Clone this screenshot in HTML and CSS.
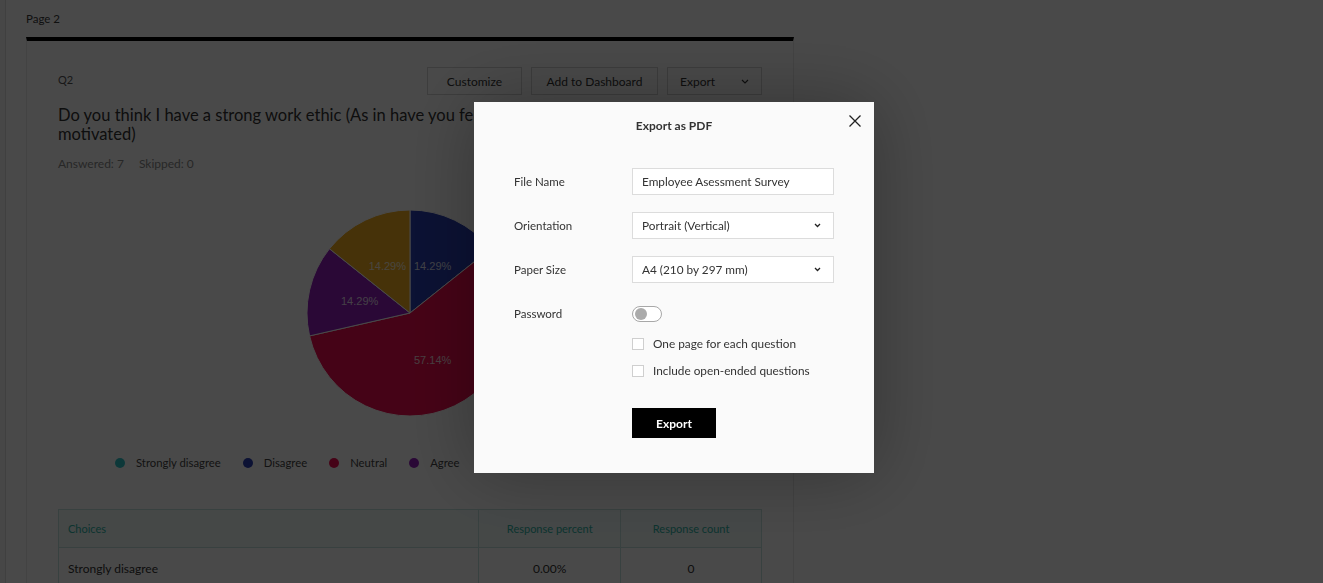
FILE: index.html
```html
<!DOCTYPE html>
<html lang="en">
<head>
<meta charset="utf-8">
<title>Survey report - Export as PDF</title>
<link rel="stylesheet" href="styles.css">
</head>
<body>
<div class="app">
  <aside class="rail"></aside>
  <main class="content">
    <div class="page-label">Page 2</div>
    <section class="card">
      <div class="card-head">
        <span class="qno">Q2</span>
        <div class="actions">
          <button class="btn btn-customize">Customize</button>
          <button class="btn btn-dash">Add to Dashboard</button>
          <button class="btn btn-export">Export
            <svg class="chev" viewBox="0 0 8 5" width="8" height="5"><path d="M1 1l3 3 3-3" fill="none" stroke="#333" stroke-width="1.2"/></svg>
          </button>
        </div>
      </div>
      <h2 class="question">Do you think I have a strong work ethic (As in have you felt motivated)</h2>
      <div class="stats"><span>Answered: 7</span><span>Skipped: 0</span></div>
      <div class="chart">
        <svg width="704" height="240" viewBox="0 0 704 240">
          <g stroke="#ffffff" stroke-width="1">
            <path d="M352 115 L352 12 A103 103 0 0 1 432.53 50.78 Z" fill="#2a3fb4"/>
            <path d="M352 115 L432.53 50.78 A103 103 0 1 1 251.58 137.92 Z" fill="#f20d50"/>
            <path d="M352 115 L251.58 137.92 A103 103 0 0 1 271.47 50.78 Z" fill="#931ebd"/>
            <path d="M352 115 L271.47 50.78 A103 103 0 0 1 352 12 Z" fill="#f5b020"/>
          </g>
          <g class="pie-labels">
            <text x="356" y="72">14.29%</text>
            <text x="348" y="72" text-anchor="end">14.29%</text>
            <text x="283" y="107">14.29%</text>
            <text x="356" y="166">57.14%</text>
          </g>
        </svg>
      </div>
      <ul class="legend">
        <li><i class="dot" style="background:#2ec4c8"></i>Strongly disagree</li>
        <li><i class="dot" style="background:#2a3fb4"></i>Disagree</li>
        <li><i class="dot" style="background:#f20d50"></i>Neutral</li>
        <li><i class="dot" style="background:#931ebd"></i>Agree</li>
        <li><i class="dot" style="background:#f5b020"></i>Strongly agree</li>
      </ul>
      <table class="results">
        <thead>
          <tr><th class="c-choice">Choices</th><th class="c-pct">Response percent</th><th class="c-cnt">Response count</th></tr>
        </thead>
        <tbody>
          <tr><td class="c-choice">Strongly disagree</td><td class="c-pct">0.00%</td><td class="c-cnt">0</td></tr>
        </tbody>
      </table>
    </section>
  </main>
</div>

<div class="overlay"></div>

<div class="modal" role="dialog" aria-label="Export as PDF">
  <button class="close" aria-label="Close">
    <svg viewBox="0 0 12 12" width="12" height="12"><path d="M0.5 0.5L11.5 11.5M11.5 0.5L0.5 11.5" stroke="#222" stroke-width="1.3" fill="none"/></svg>
  </button>
  <div class="modal-title">Export as PDF</div>
  <form class="form">
    <div class="row">
      <label class="lbl">File Name</label>
      <div class="field">Employee Asessment Survey</div>
    </div>
    <div class="row">
      <label class="lbl">Orientation</label>
      <div class="field select">Portrait (Vertical)
        <svg class="sel-chev" viewBox="0 0 7 5" width="7" height="5"><path d="M1 1l2.5 2.5L6 1" fill="none" stroke="#222" stroke-width="1.3"/></svg>
      </div>
    </div>
    <div class="row">
      <label class="lbl">Paper Size</label>
      <div class="field select">A4 (210 by 297 mm)
        <svg class="sel-chev" viewBox="0 0 7 5" width="7" height="5"><path d="M1 1l2.5 2.5L6 1" fill="none" stroke="#222" stroke-width="1.3"/></svg>
      </div>
    </div>
    <div class="row row-last">
      <label class="lbl">Password</label>
      <span class="toggle"><span class="knob"></span></span>
    </div>
    <div class="check-row"><span class="box"></span>One page for each question</div>
    <div class="check-row"><span class="box"></span>Include open-ended questions</div>
    <div class="actions-row"><button type="button" class="export-btn">Export</button></div>
  </form>
</div>
</body>
</html>
```

FILE: styles.css
```css
* { box-sizing: border-box; }

body {
  margin: 0;
  width: 1323px;
  height: 583px;
  overflow: hidden;
  background: #ffffff;
  font-family: Lato, "Noto Sans", sans-serif;
  color: #333;
}

.app {
  display: flex;
  height: 583px;
}

.rail {
  flex: none;
  width: 6px;
  background: #f7f7f7;
  border-right: 1px solid #e0e0e0;
}

.content {
  flex: 1;
  padding-left: 20px;
}

.page-label {
  height: 37px;
  line-height: 38px;
  font-size: 11.5px;
  color: #3a3a3a;
}

.card {
  width: 768px;
  border-top: 4px solid #000;
  border-left: 1px solid #e8e8e8;
  border-right: 1px solid #e8e8e8;
  padding: 0 31px;
}

.card-head {
  display: flex;
  justify-content: space-between;
  align-items: center;
  padding-top: 26px;
}

.qno {
  font-size: 11px;
  color: #555;
  margin-top: -4px;
}

.actions {
  display: flex;
  gap: 9px;
}

.btn {
  height: 28px;
  border: 1px solid #d4d4d4;
  background: #fff;
  font-family: inherit;
  font-size: 12px;
  color: #333;
  padding: 0;
}

.btn-customize { width: 95px; }
.btn-dash { width: 127px; }
.btn-export {
  width: 95px;
  display: flex;
  align-items: center;
  justify-content: space-between;
  padding: 0 12px 0 12px;
}

.question {
  margin: 10px 0 0;
  max-width: 460px;
  font-size: 16.5px;
  line-height: 19px;
  font-weight: 400;
  color: #333;
  padding-top: 1px;
}

.stats {
  margin-top: 13px;
  font-size: 12px;
  line-height: 14px;
  color: #8a8a8a;
  display: flex;
  gap: 15px;
}

.chart {
  margin-top: 27px;
  height: 240px;
}

.chart svg { display: block; }

.pie-labels text {
  font-family: "Liberation Sans", Arial, sans-serif;
  font-size: 11px;
  fill: #ffffff;
  fill-opacity: 0.85;
}

.legend {
  list-style: none;
  margin: 18px 0 0;
  padding: 0 0 0 57px;
  display: flex;
  gap: 22px;
  font-size: 11.3px;
  line-height: 14px;
  color: #444;
}

.legend li {
  display: flex;
  align-items: center;
  gap: 11px;
}

.dot {
  width: 10px;
  height: 10px;
  border-radius: 50%;
  display: inline-block;
}

.results {
  margin-top: 39px;
  width: 704px;
  border-collapse: collapse;
  font-size: 11px;
}

.results th,
.results td {
  border: 1px solid #c4e3df;
  font-weight: 400;
}

.results th {
  height: 38px;
  background: #f0faf9;
  color: #2fb5a5;
}

.c-choice { width: 421px; text-align: left; padding-left: 9px; }
.c-pct { width: 142px; text-align: center; }
.c-cnt { width: 141px; text-align: center; }

.results td {
  font-size: 12px;
  line-height: 14px;
  color: #333;
  height: 35px;
  vertical-align: top;
  padding-top: 14px;
  border-bottom: 0;
}

.overlay {
  position: fixed;
  inset: 0;
  background: rgba(0, 0, 0, 0.714);
}

.modal {
  position: fixed;
  left: 474px;
  top: 102px;
  width: 400px;
  height: 371px;
  background: #fafafa;
  padding: 17px 40px 0;
  box-shadow: 0 0 70px rgba(0, 0, 0, 0.3);
}

.close {
  position: absolute;
  right: 13px;
  top: 13px;
  width: 12px;
  height: 12px;
  padding: 0;
  border: 0;
  background: none;
  display: block;
}

.close svg { display: block; }

.modal-title {
  text-align: center;
  font-size: 12px;
  line-height: 14px;
  font-weight: 700;
  color: #333;
}

.form {
  margin-top: 35px;
  font-size: 11.8px;
  color: #333;
}

.row {
  display: flex;
  align-items: center;
  height: 27px;
  margin-bottom: 17px;
}

.row-last { margin-bottom: 3px; }

.lbl {
  width: 118px;
  flex: none;
  font-size: 11.5px;
}

.field {
  width: 202px;
  height: 27px;
  border: 1px solid #dcdcdc;
  background: #fff;
  display: flex;
  align-items: center;
  padding: 0 12px 0 9px;
}

.select { justify-content: space-between; }

.toggle {
  position: relative;
  width: 30px;
  height: 16px;
  border: 1px solid #a8a8a8;
  border-radius: 8px;
  background: #fff;
}

.knob {
  position: absolute;
  left: 2px;
  top: 1px;
  width: 12px;
  height: 12px;
  border-radius: 50%;
  background: #ababab;
}

.check-row {
  display: flex;
  align-items: center;
  height: 27px;
  margin-left: 118px;
  gap: 9px;
}

.box {
  width: 12px;
  height: 12px;
  border: 1px solid #cfcfcf;
  background: #fff;
}

.actions-row {
  margin: 24px 0 0 118px;
}

.export-btn {
  width: 84px;
  height: 30px;
  border: 0;
  background: #000;
  color: #fff;
  font-family: inherit;
  font-size: 12px;
  font-weight: 700;
}
```
